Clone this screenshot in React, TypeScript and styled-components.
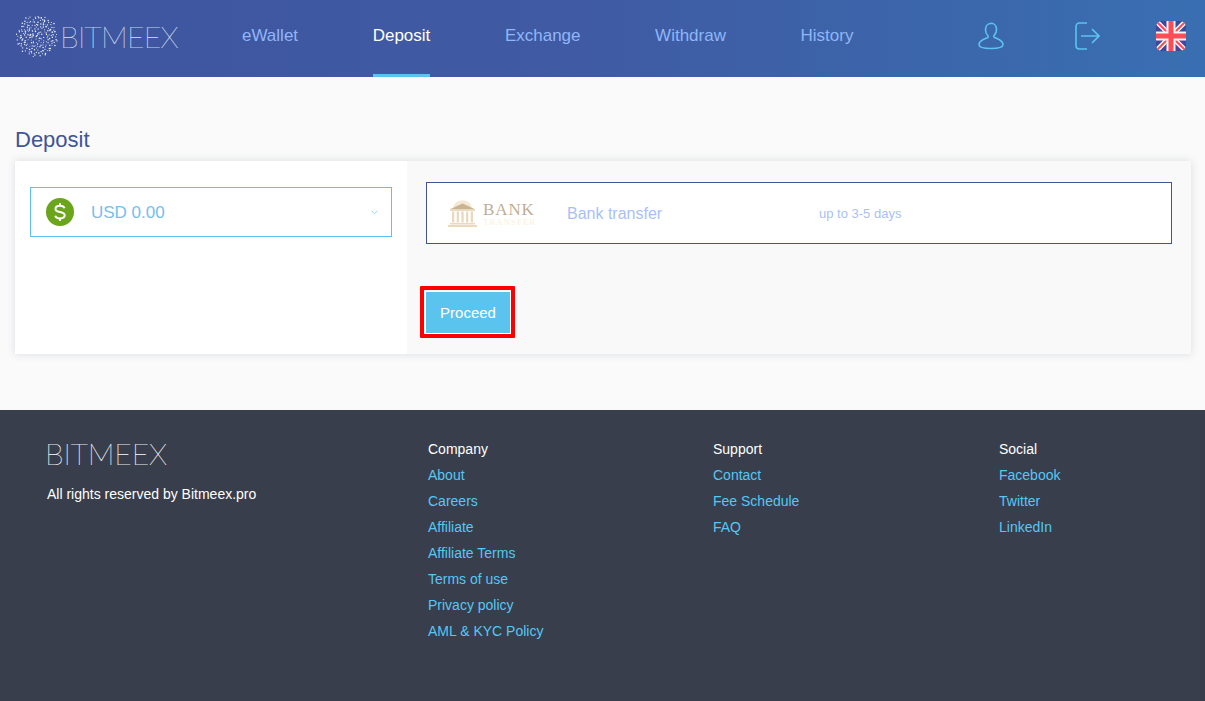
import React from 'react';
import styled, { createGlobalStyle } from 'styled-components';

const palette = {
  indigo: '#3f5599',
  sky: '#5bc4ee',
  link: '#55c8f5',
  periwinkle: '#a9bffb',
  navText: '#8fb6f8',
  footer: '#383e4c',
  page: '#fafafa',
};

const GlobalStyle = createGlobalStyle`
  html, body {
    margin: 0;
    padding: 0;
    background: ${palette.page};
    font-family: "Liberation Sans", Arial, sans-serif;
  }
  * {
    box-sizing: border-box;
  }
`;

const Page = styled.div`
  width: 1205px;
  height: 701px;
  overflow: hidden;
  display: flex;
  flex-direction: column;
`;

const Header = styled.header`
  height: 77px;
  flex: none;
  display: flex;
  align-items: stretch;
  padding-left: 16px;
  background: linear-gradient(90deg, #3f55a0 0%, #3f5ba3 50%, #396fb2 100%);
`;

const Brand = styled.div`
  width: 226px;
  flex: none;
  display: flex;
  align-items: center;
  gap: 2px;
  padding-bottom: 5px;
`;

const Wordmark = styled.span<{ $spacing: number; $color: string }>`
  display: block;
  font-family: "Lato", "Liberation Sans", sans-serif;
  font-weight: 100;
  font-size: 30px;
  letter-spacing: ${(p) => p.$spacing}px;
  line-height: 1;
  color: ${(p) => p.$color};
  -webkit-text-stroke: 0.2px ${(p) => p.$color};
`;

const FooterWordmark = styled(Wordmark)`
  margin-left: -2px;
`;

const Nav = styled.nav`
  display: flex;
  gap: 74.6px;
`;

const NavItem = styled.a<{ $active?: boolean }>`
  display: block;
  padding-top: 26px;
  font-size: 17px;
  line-height: 19px;
  color: ${(p) => (p.$active ? '#ffffff' : palette.navText)};
  border-bottom: 3px solid ${(p) => (p.$active ? palette.sky : 'transparent')};
`;

const HeaderIcons = styled.div`
  margin-left: auto;
  padding-right: 19px;
  display: flex;
  align-items: center;
  gap: 56px;
  padding-bottom: 5px;
`;

const UserSvg = styled.svg`
  margin-right: 15px;
`;

const Main = styled.main`
  height: 333px;
  flex: none;
  padding: 50px 14px 0 15px;
`;

const Title = styled.h1`
  margin: 0 0 8px;
  font-size: 22px;
  line-height: 26px;
  font-weight: 400;
  color: ${palette.indigo};
`;

const Card = styled.section`
  height: 193px;
  display: flex;
  box-shadow: 0 0 8px rgba(60, 70, 120, 0.16);
`;

const LeftPane = styled.div`
  width: 392px;
  flex: none;
  padding: 26px 15px 0;
  background: #ffffff;
`;

const RightPane = styled.div`
  flex: 1;
  padding: 21px 19px 0 19px;
  background: #f9f9f9;
`;

const AccountSelect = styled.div`
  height: 50px;
  display: flex;
  align-items: center;
  padding: 0 13px 0 15px;
  background: #ffffff;
  border: 1px solid ${palette.sky};
`;

const AccountAmount = styled.span`
  margin-left: 17px;
  padding-top: 2px;
  flex: 1;
  font-size: 17px;
  color: #74c0ee;
`;

const MethodBox = styled.div`
  height: 62px;
  display: flex;
  align-items: center;
  padding-left: 21px;
  background: #ffffff;
  border: 1px solid ${palette.indigo};
`;

const BankLogo = styled.div`
  width: 119px;
  flex: none;
  display: flex;
  align-items: center;
  gap: 6px;
`;

const BankWords = styled.div`
  display: flex;
  flex-direction: column;
  padding-top: 2px;
  font-family: "Liberation Serif", serif;
`;

const BankWord = styled.span`
  font-size: 17px;
  line-height: 16px;
  color: #bfae96;
  letter-spacing: 0.9px;
`;

const BankSubWord = styled.span`
  font-size: 9px;
  line-height: 9px;
  color: #fbf0dc;
  letter-spacing: 0.9px;
`;

const MethodName = styled.span`
  width: 252px;
  flex: none;
  padding-top: 1px;
  font-size: 16px;
  color: ${palette.periwinkle};
`;

const MethodTime = styled.span`
  padding-top: 1px;
  font-size: 13px;
  color: ${palette.periwinkle};
`;

const ProceedFrame = styled.div`
  width: 95px;
  height: 52px;
  margin: 42px 0 0 -6px;
  padding: 2px 1px 1px 2px;
  background: #ffffff;
  border: 4px solid #ff0000;
  border-radius: 1px;
`;

const ProceedButton = styled.button`
  display: block;
  width: 100%;
  height: 100%;
  padding: 0;
  border: 0;
  background: ${palette.sky};
  color: #ffffff;
  font-family: inherit;
  font-size: 15px;
`;

const Footer = styled.footer`
  flex: 1;
  display: flex;
  padding: 26px 0 0 47px;
  background: ${palette.footer};
`;

const FooterBrand = styled.div`
  width: 381px;
  flex: none;
  padding-top: 2px;
`;

const Copyright = styled.p`
  margin: 18px 0 0;
  font-size: 14px;
  line-height: 16px;
  color: #ffffff;
`;

const FooterColumn = styled.div<{ $width: number }>`
  width: ${(p) => p.$width}px;
  flex: none;
  display: flex;
  flex-direction: column;
`;

const ColumnTitle = styled.div`
  font-size: 14px;
  line-height: 26px;
  color: #ffffff;
`;

const FooterLink = styled.a`
  font-size: 14px;
  line-height: 26px;
  color: ${palette.link};
`;

// seeded so the globe comes out the same on every run
const globeDots = (() => {
  const dots: { x: number; y: number; r: number }[] = [];
  let seed = 17;
  const next = () => {
    seed = (seed * 16807) % 2147483647;
    return seed / 2147483647;
  };
  for (let i = 0; i < 190; i++) {
    const angle = i * 2.39996;
    const dist = 19.5 * Math.sqrt((i + 0.5) / 190);
    dots.push({
      x: 20 + dist * Math.cos(angle) + (next() - 0.5) * 1.8,
      y: 20 + dist * Math.sin(angle) + (next() - 0.5) * 1.8,
      r: 0.45 + next() * 0.35,
    });
  }
  return dots;
})();

const GlobeLogo = () => (
  <svg width="42" height="42" viewBox="0 0 40 40" fill="#eef1f9">
    {globeDots.map((d, i) => (
      <circle key={i} cx={d.x} cy={d.y} r={d.r} />
    ))}
  </svg>
);

const UserIcon = () => (
  <UserSvg width="26" height="28" viewBox="0 0 26 28" fill="none" stroke={palette.sky} strokeWidth="1.6">
    <path d="M13 1.500c-3.200 0-5.500 2.500-5.500 6.200 0 2.700 1 4.600 2.300 5.800.5.500.5 1.700-.3 2.200C6.500 17 1 18.500 1 22.500c0 2.500 4 4 12 4s12-1.500 12-4c0-4-5.500-5.500-8.500-7-.8-.5-.8-1.700-.3-2.200 1.300-1.200 2.300-3.100 2.300-5.800 0-3.700-2.300-6.200-5.500-6.200z" />
  </UserSvg>
);

const LogoutIcon = () => (
  <svg width="25" height="28" viewBox="0 0 25 28" fill="none" stroke={palette.sky} strokeWidth="1.6">
    <path d="M12 1H4.500C2.500 1 1 2.500 1 4.500v19C1 25.500 2.500 27 4.500 27H12" />
    <path d="M6 14h18M17 7l7 7-7 7" />
  </svg>
);

const FlagIcon = () => (
  <svg width="30" height="30" viewBox="0 0 30 30">
    <defs>
      <clipPath id="flag-clip">
        <rect width="30" height="30" rx="6" />
      </clipPath>
    </defs>
    <g clipPath="url(#flag-clip)">
      <rect width="30" height="30" fill="#41479b" />
      <path d="M0 0l30 30M30 0L0 30" stroke="#f5f5f5" strokeWidth="5" />
      <path d="M0 0l30 30M30 0L0 30" stroke="#ff4b55" strokeWidth="2" />
      <path d="M15 0v30M0 15h30" stroke="#f5f5f5" strokeWidth="9" />
      <path d="M15 0v30M0 15h30" stroke="#ff4b55" strokeWidth="5" />
    </g>
  </svg>
);

const DollarIcon = () => (
  <svg width="28" height="28" viewBox="0 0 28 28">
    <circle cx="14" cy="14" r="14" fill="#6aa51c" />
    <path d="M18.500 10.300c-.5-1.500-2.200-2.500-4.500-2.500-2.600 0-4.500 1.200-4.500 3.100 0 4.400 9.200 1.900 9.200 6.400 0 1.900-2 3.100-4.700 3.100-2.500 0-4.300-1-4.800-2.700M14 5.300v2.500M14 20.400v2.500" fill="none" stroke="#ffffff" strokeWidth="2" />
  </svg>
);

const ChevronIcon = () => (
  <svg width="7" height="5" viewBox="0 0 8 6" fill="none" stroke="#8fd6f5" strokeWidth="1.200">
    <path d="M.5 1L4 4.500 7.500 1" />
  </svg>
);

const BankIcon = () => (
  <svg width="29" height="27" viewBox="0 0 29 27" fill="#e8d9bf">
    <path d="M5 7.500C6 3 10 .5 14.500 .5S23 3 24 7.500z" fill="#f5e8d2" />
    <path d="M2.500 9L14.500 3.500 26.500 9z" fill="#c8b394" />
    <rect x="2" y="9" width="25" height="2" />
    <rect x="4" y="11.500" width="2.300" height="11" />
    <rect x="8.700" y="11.500" width="2.300" height="11" />
    <rect x="13.400" y="11.500" width="2.300" height="11" />
    <rect x="18" y="11.500" width="2.300" height="11" />
    <rect x="22.700" y="11.500" width="2.300" height="11" />
    <rect x="2" y="23" width="25" height="1.500" />
    <rect x="0" y="25" width="29" height="2" />
  </svg>
);

const companyLinks = ['About', 'Careers', 'Affiliate', 'Affiliate Terms', 'Terms of use', 'Privacy policy', 'AML & KYC Policy'];
const supportLinks = ['Contact', 'Fee Schedule', 'FAQ'];
const socialLinks = ['Facebook', 'Twitter', 'LinkedIn'];

const navItems = ['eWallet', 'Deposit', 'Exchange', 'Withdraw', 'History'];

const App: React.FC = () => {
  return (
    <Page>
      <GlobalStyle />
      <Header>
        <Brand>
          <GlobeLogo />
          <Wordmark $spacing={-0.7} $color="#dbe2f2">
            BITMEEX
          </Wordmark>
        </Brand>
        <Nav>
          {navItems.map((item) => (
            <NavItem key={item} $active={item === 'Deposit'}>
              {item}
            </NavItem>
          ))}
        </Nav>
        <HeaderIcons>
          <UserIcon />
          <LogoutIcon />
          <FlagIcon />
        </HeaderIcons>
      </Header>
      <Main>
        <Title>Deposit</Title>
        <Card>
          <LeftPane>
            <AccountSelect>
              <DollarIcon />
              <AccountAmount>USD 0.00</AccountAmount>
              <ChevronIcon />
            </AccountSelect>
          </LeftPane>
          <RightPane>
            <MethodBox>
              <BankLogo>
                <BankIcon />
                <BankWords>
                  <BankWord>BANK</BankWord>
                  <BankSubWord>TRANSFER</BankSubWord>
                </BankWords>
              </BankLogo>
              <MethodName>Bank transfer</MethodName>
              <MethodTime>up to 3-5 days</MethodTime>
            </MethodBox>
            <ProceedFrame>
              <ProceedButton>Proceed</ProceedButton>
            </ProceedFrame>
          </RightPane>
        </Card>
      </Main>
      <Footer>
        <FooterBrand>
          <FooterWordmark $spacing={-0.1} $color="#ffffff">
            BITMEEX
          </FooterWordmark>
          <Copyright>All rights reserved by Bitmeex.pro</Copyright>
        </FooterBrand>
        <FooterColumn $width={285}>
          <ColumnTitle>Company</ColumnTitle>
          {companyLinks.map((link) => (
            <FooterLink key={link}>{link}</FooterLink>
          ))}
        </FooterColumn>
        <FooterColumn $width={286}>
          <ColumnTitle>Support</ColumnTitle>
          {supportLinks.map((link) => (
            <FooterLink key={link}>{link}</FooterLink>
          ))}
        </FooterColumn>
        <FooterColumn $width={150}>
          <ColumnTitle>Social</ColumnTitle>
          {socialLinks.map((link) => (
            <FooterLink key={link}>{link}</FooterLink>
          ))}
        </FooterColumn>
      </Footer>
    </Page>
  );
};

export default App;
